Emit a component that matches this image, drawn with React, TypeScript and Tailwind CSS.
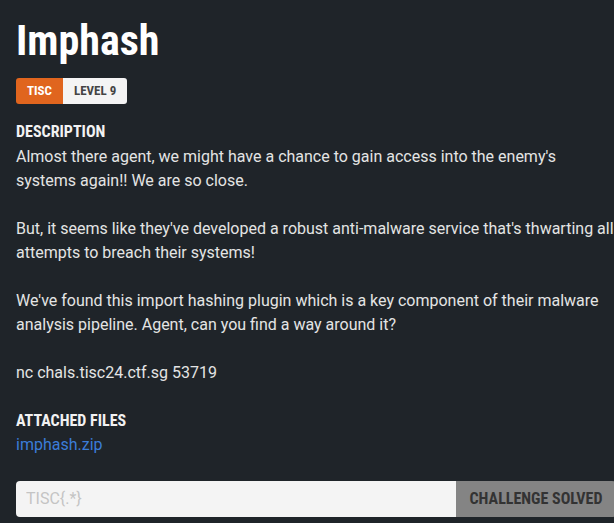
import React from "react";

const cond = { fontFamily: '"Roboto Condensed", "DejaVu Sans Condensed", sans-serif' };

export default function App() {
  return (
    <div className="w-[614px] h-[523px] overflow-hidden bg-[#1f2429]">
      <div className="w-[636px] px-4 pt-[16px]" style={{ fontFamily: "Roboto, sans-serif" }}>
        <h1 className="text-[42px] leading-[50px] font-bold text-white" style={cond}>Imphash</h1>
        <div className="mt-[12px] flex">
          <span className="h-[26px] px-[11px] flex items-center bg-[#e0651e] text-white text-[13px] font-bold rounded-l-[3px]" style={cond}>TISC</span>
          <span className="h-[26px] px-[11px] flex items-center bg-[#f4f4f4] text-[#444] text-[13px] font-bold rounded-r-[3px]" style={cond}>LEVEL 9</span>
        </div>
        <div className="mt-[18px] mb-[3px] text-[16px] leading-[20px] font-bold text-[#f2f2f2]" style={cond}>DESCRIPTION</div>
        <div className="text-[16px] leading-[24px] text-[#e4e4e4]">
          <p>Almost there agent, we might have a chance to gain access into the enemy's systems again!! We are so close.</p>
          <p className="mt-6">But, it seems like they've developed a robust anti-malware service that's thwarting all attempts to breach their systems!</p>
          <p className="mt-6">We've found this import hashing plugin which is a key component of their malware analysis pipeline. Agent, can you find a way around it?</p>
          <p className="mt-6">nc chals.tisc24.ctf.sg 53719</p>
        </div>
        <div className="mt-[26px] text-[16px] leading-[20px] font-bold text-[#f2f2f2]" style={cond}>ATTACHED FILES</div>
        <a className="block mt-[2px] text-[16px] leading-[24px] text-[#3b7dd8]">imphash.zip</a>
        <div className="mt-[24px] flex w-[600px] h-[36px]">
          <input
            className="flex-1 min-w-0 bg-[#f4f4f4] rounded-l-[4px] px-[10px] text-[16px] text-[#333] placeholder:text-[#c4c4c4] outline-none"
            placeholder="TISC{.*}"
            style={{ fontFamily: "Roboto, sans-serif" }}
          />
          <button className="w-[160px] bg-[#848484] text-[#333] text-[16px] font-bold rounded-r-[4px]" style={cond}>CHALLENGE SOLVED</button>
        </div>
      </div>
    </div>
  );
}
